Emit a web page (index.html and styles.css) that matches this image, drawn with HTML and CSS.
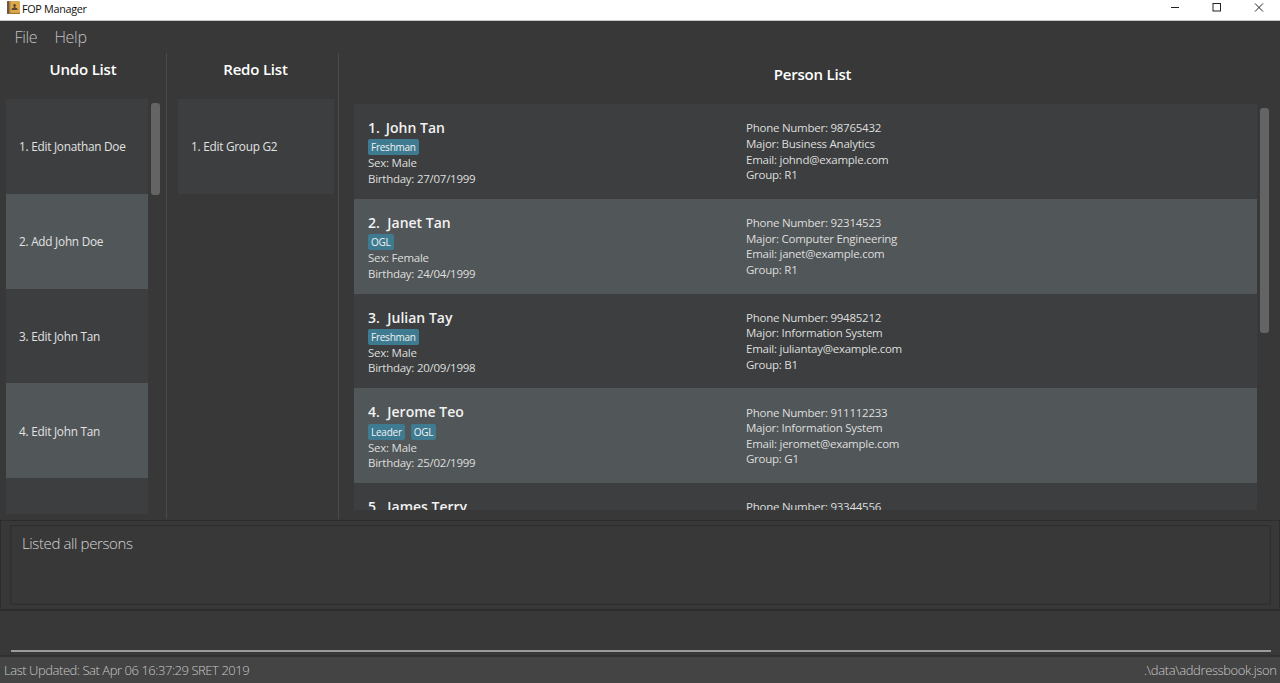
FILE: index.html
```html
<!DOCTYPE html>
<html lang="en">
<head>
<meta charset="utf-8">
<title>FOP Manager</title>
<link rel="stylesheet" href="styles.css">
</head>
<body>
<div class="window">
  <header class="titlebar">
    <svg class="app-icon" width="13" height="13" viewBox="0 0 13 13"><rect width="13" height="13" rx="1" fill="#dba94c"/><rect width="2.6" height="13" rx=".8" fill="#6b5648"/><rect x="2.6" width="1" height="13" fill="#b98a45"/><rect x="3" y="11.8" width="10" height="1.2" fill="#a87828"/><circle cx="7.600" cy="4.400" r="1.300" fill="#5b4630"/><path d="M7 5h1.200v1.500l2.300 1v1.500H4.700V7.500L7 6.500z" fill="#5b4630"/></svg>
    <span class="app-title">FOP Manager</span>
    <div class="controls">
      <svg width="10" height="10" viewBox="0 0 10 10"><path d="M1 5.500h8" stroke="#222" fill="none"/></svg>
      <svg width="10" height="10" viewBox="0 0 10 10"><rect x="1" y="1.500" width="7.500" height="7.500" stroke="#222" fill="none"/></svg>
      <svg width="10" height="10" viewBox="0 0 10 10"><path d="M1 1.500l8 8M9 1.500l-8 8" stroke="#222" fill="none"/></svg>
    </div>
  </header>
  <nav class="menu"><span class="file">File</span><span class="help">Help</span></nav>
  <main class="panes">
    <section class="pane undo">
      <h2>Undo List</h2>
      <div class="scroll">
        <div class="list">
          <div class="cell">1. Edit Jonathan Doe</div>
          <div class="cell">2. Add John Doe</div>
          <div class="cell">3. Edit John Tan</div>
          <div class="cell">4. Edit John Tan</div>
          <div class="cell"></div>
        </div>
        <div class="thumb"></div>
      </div>
    </section>
    <section class="pane redo">
      <h2>Redo List</h2>
      <div class="scroll"><div class="list"><div class="cell">1. Edit Group G2</div></div></div>
    </section>
    <section class="pane persons">
      <h2>Person List</h2>
      <div class="scroll">
        <div class="list">
          <article class="card">
            <div><h3><span>1.</span>John Tan</h3><div class="tags"><b>Freshman</b></div><p>Sex: Male</p><p>Birthday: 27/07/1999</p></div>
            <div class="info"><p>Phone Number: 98765432</p><p>Major: Business Analytics</p><p>Email: johnd@example.com</p><p>Group: R1</p></div>
          </article>
          <article class="card">
            <div><h3><span>2.</span>Janet Tan</h3><div class="tags"><b>OGL</b></div><p>Sex: Female</p><p>Birthday: 24/04/1999</p></div>
            <div class="info"><p>Phone Number: 92314523</p><p>Major: Computer Engineering</p><p>Email: janet@example.com</p><p>Group: R1</p></div>
          </article>
          <article class="card">
            <div><h3><span>3.</span>Julian Tay</h3><div class="tags"><b>Freshman</b></div><p>Sex: Male</p><p>Birthday: 20/09/1998</p></div>
            <div class="info"><p>Phone Number: 99485212</p><p>Major: Information System</p><p>Email: juliantay@example.com</p><p>Group: B1</p></div>
          </article>
          <article class="card">
            <div><h3><span>4.</span>Jerome Teo</h3><div class="tags"><b>Leader</b><b>OGL</b></div><p>Sex: Male</p><p>Birthday: 25/02/1999</p></div>
            <div class="info"><p>Phone Number: 911112233</p><p>Major: Information System</p><p>Email: jeromet@example.com</p><p>Group: G1</p></div>
          </article>
          <article class="card">
            <div><h3><span>5.</span>James Terry</h3></div>
            <div class="info"><p>Phone Number: 93344556</p></div>
          </article>
        </div>
        <div class="thumb"></div>
      </div>
    </section>
  </main>
  <section class="result"><div class="result-box">Listed all persons</div></section>
  <section class="command"><div class="command-line"></div></section>
  <footer class="status"><span class="updated">Last Updated: Sat Apr 06 16:37:29 SRET 2019</span><span class="path">.\data\addressbook.json</span></footer>
</div>
</body>
</html>
```

FILE: styles.css
```css
* { box-sizing: border-box; }
body { margin: 0; font-family: "Open Sans", "Noto Sans", sans-serif; background: #383838; overflow: hidden; }
h2, h3, p { margin: 0; }
.window { width: 1280px; height: 683px; display: flex; flex-direction: column; }
.titlebar { height: 21px; flex: none; background: #fff; border-bottom: 1px solid #c3c7c7; display: flex; align-items: flex-start; padding: 1px 16px 0 7px; }
.app-title { font-size: 10.800px; line-height: 15px; color: #111; margin-left: 2px; letter-spacing: -.3px; white-space: nowrap; }
.controls { margin: 1px 0 0 auto; display: flex; gap: 32px; }
.menu { height: 32px; flex: none; padding-left: 14.500px; display: flex; gap: 17px; font-size: 16px; font-weight: 300; line-height: 32px; color: #c2c2c2; letter-spacing: -.3px; }
.panes { height: 466px; flex: none; display: grid; grid-template-columns: 167px 172px 1fr; }
.pane { display: flex; flex-direction: column; min-width: 0; border-right: 1px solid #4a4a4a; }
.pane h2 { font-size: 15px; font-weight: 600; line-height: 20px; color: #fff; text-align: center; letter-spacing: -.2px; }
.undo h2, .redo h2 { line-height: 21px; height: 20px; }
.redo h2 { padding-left: 6px; }
.undo, .redo { padding-top: 6px; }
.scroll { flex: none; display: flex; }
.undo .scroll, .redo .scroll { margin-top: 20px; height: 415px; }
.undo .scroll { padding-left: 6px; gap: 3px; }
.redo .scroll { padding-left: 11px; }
.list { overflow: hidden; }
.undo .list { width: 142px; }
.redo .list { width: 156px; }
.cell { height: 94.750px; background: #3c3e3f; display: flex; align-items: center; padding-left: 13px; font-size: 11.800px; color: #e2e2e2; letter-spacing: -.25px; white-space: nowrap; }
.cell:nth-child(even), .card:nth-child(even) { background: #515658; }
.thumb { background: #646464; border-radius: 3px; width: 9px; flex: none; }
.undo .thumb { height: 92px; margin-top: 4px; }
.persons { border-right: 0; padding-top: 11px; }
.persons h2 { padding-left: 6px; }
.persons .scroll { margin-top: 20px; height: 405.500px; padding-left: 15px; gap: 3px; }
.persons .list { width: 903px; }
.persons .thumb { height: 225px; margin-top: 4px; }
.card { height: 94.750px; background: #3c3e3f; padding: 14px 0 0 14px; display: grid; grid-template-columns: 378px 1fr; font-size: 11.500px; color: #dedede; letter-spacing: -.25px; white-space: nowrap; }
.card p { height: 15.600px; line-height: 15.600px; }
.info { padding-top: 2.400px; }
.card h3 { height: 21.400px; line-height: 20px; font-size: 14px; font-weight: 600; color: #f2f2f2; letter-spacing: 0; }
.card h3 span { margin-right: 7.500px; }
.card:first-child h3 span { margin-right: 6px; }
.tags { height: 16px; display: flex; gap: 6px; }
.tags b { height: 16px; line-height: 16px; padding: 0 3px; border-radius: 2px; background: #3e7b91; font-size: 10px; font-weight: 500; color: #f2f2f2; letter-spacing: -.25px; }
.result { height: 91px; flex: none; border: solid #2c2c2c; border-width: 1px 1px 2px; margin-top: 1px; padding: 4px 8px 4px 9px; }
.result-box { height: 80px; border: 1px solid #2f2f2f; box-shadow: inset 0 0 0 1px #343434; padding: 6px 11px; font-size: 15px; font-weight: 300; line-height: 22px; color: #d4d4d4; letter-spacing: -.38px; }
.command { height: 46px; flex: none; border-bottom: 2px solid #313131; padding: 39px 9px 0 11px; }
.command-line { height: 2px; background: #9b9b9b; }
.status { flex: 1; background: #444; display: flex; justify-content: space-between; padding: 0 3.500px 0 4px; font-size: 13px; line-height: 26px; font-weight: 300; color: #c8c8c8; white-space: nowrap; letter-spacing: -.45px; }
.path { letter-spacing: -.38px; }
```
